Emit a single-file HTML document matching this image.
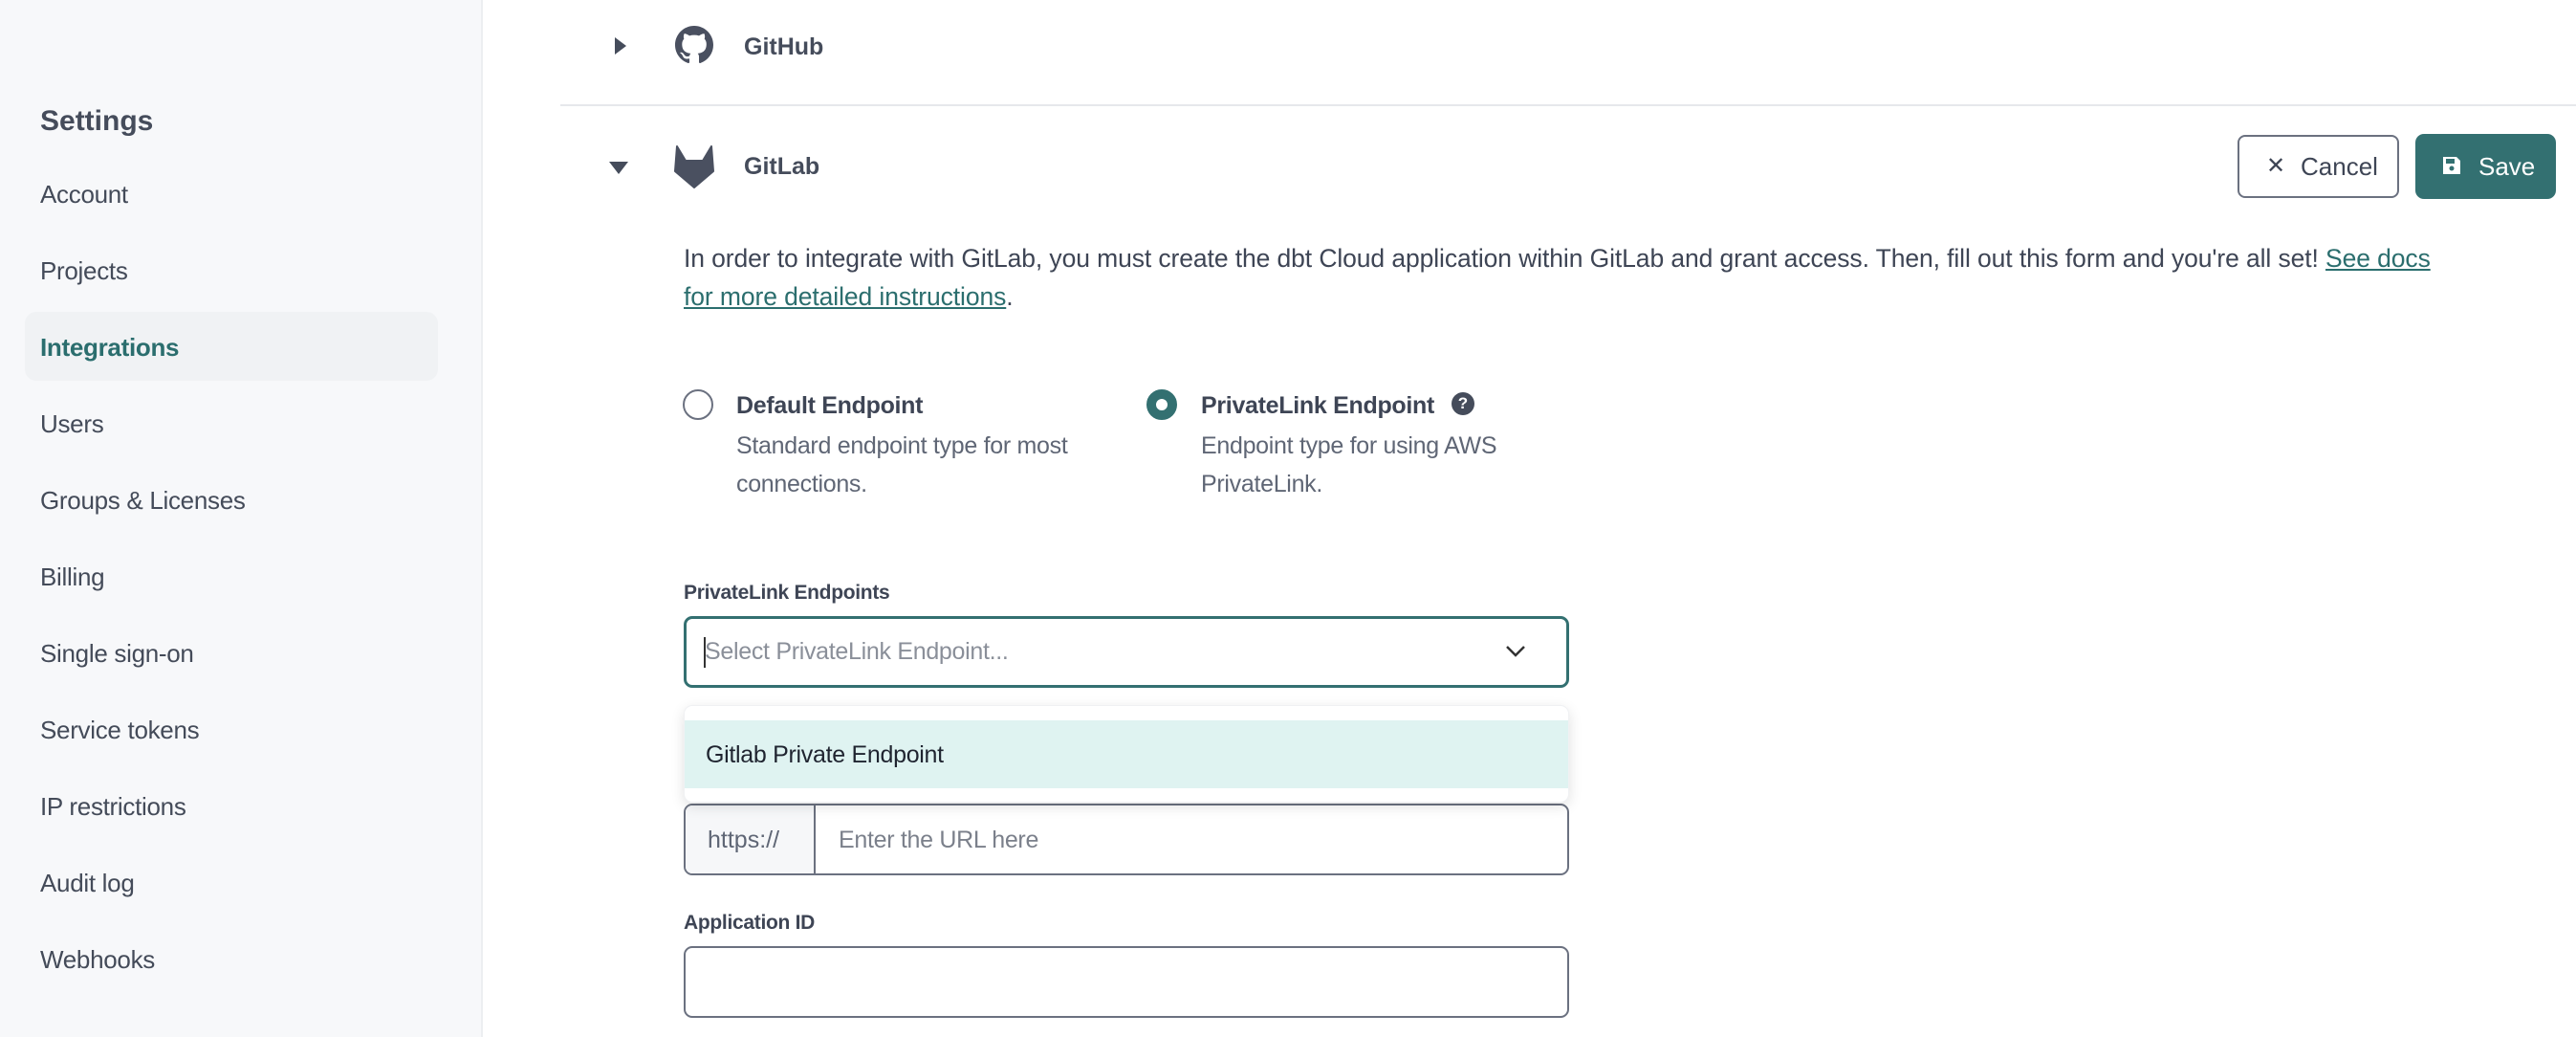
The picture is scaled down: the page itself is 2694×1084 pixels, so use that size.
<!DOCTYPE html>
<html><head><meta charset="utf-8"><style>
*{margin:0;padding:0;box-sizing:border-box}
body{width:2694px;height:1084px;overflow:hidden;background:#fff;font-family:"Liberation Sans",sans-serif;color:#3e4555;position:relative}
.a{position:absolute;white-space:nowrap}
#side{position:absolute;left:0;top:0;width:505px;height:1084px;background:#f7f8fa;border-right:2px solid #eceef1}
.nav{position:absolute;left:42px;font-size:26px;color:#444b59;letter-spacing:-0.3px}
.b{font-weight:bold}
.box{position:absolute;border:2px solid #6b7180;border-radius:9px;background:#fff}
</style></head><body>
<div id="side">
<div class="a b" style="left:42px;top:110px;font-size:30px;color:#454c5b">Settings</div>
<div style="position:absolute;left:26px;top:326px;width:432px;height:72px;background:#f0f2f4;border-radius:12px"></div>
<div class="nav" style="top:188px">Account</div>
<div class="nav" style="top:268px">Projects</div>
<div class="nav b" style="top:348px;color:#2b6e6e">Integrations</div>
<div class="nav" style="top:428px">Users</div>
<div class="nav" style="top:508px">Groups &amp; Licenses</div>
<div class="nav" style="top:588px">Billing</div>
<div class="nav" style="top:668px">Single sign-on</div>
<div class="nav" style="top:748px">Service tokens</div>
<div class="nav" style="top:828px">IP restrictions</div>
<div class="nav" style="top:908px">Audit log</div>
<div class="nav" style="top:988px">Webhooks</div>
</div>

<!-- GitHub row -->
<svg class="a" style="left:641px;top:37px" width="16" height="22"><path d="M2 2 L14 11 L2 20Z" fill="#454c5b"/></svg>
<svg class="a" style="left:706px;top:27px" width="40" height="40" viewBox="0 0 16 16"><path fill="#4a5060" d="M8 0C3.58 0 0 3.58 0 8c0 3.54 2.29 6.53 5.47 7.590.4.07.55-.17.55-.38 0-.19-.01-.82-.01-1.49-2.01.37-2.53-.49-2.69-.94-.09-.23-.48-.94-.82-1.130-.28-.15-.68-.52-.01-.53.63-.01 1.08.58 1.23.82.72 1.21 1.87.87 2.33.66.07-.52.28-.87.51-1.07-1.78-.2-3.64-.89-3.64-3.95 0-.87.31-1.59.82-2.15-.08-.2-.36-1.02.08-2.12 0 0 .67-.21 2.2.82.64-.18 1.32-.27 2-.27.68 0 1.36.09 2 .27 1.53-1.04 2.2-.82 2.2-.82.44 1.1.16 1.92.08 2.12.51.56.82 1.27.82 2.15 0 3.07-1.87 3.75-3.65 3.95.29.25.54.73.54 1.48 0 1.07-.01 1.93-.01 2.2 0 .21.15.46.55.38A8.013 8.013 0 0016 8c0-4.42-3.58-8-8-8z"/></svg>
<div class="a b" style="left:778px;top:35px;font-size:25px;color:#454c5b">GitHub</div>
<div class="a" style="left:586px;top:109px;width:2108px;height:2px;background:#e6e8ec"></div>

<!-- GitLab row -->
<svg class="a" style="left:636px;top:168px" width="22" height="16"><path d="M1 1 L21 1 L11 14Z" fill="#454c5b"/></svg>
<svg class="a" style="left:705px;top:152px" width="42" height="46" viewBox="0 0 42 46"><path d="M3 1 L12 16 L30 16 L39 1 L41 27 L21 44 L1 27Z" fill="#4a5060" stroke="#4a5060" stroke-linejoin="round" stroke-width="2"/></svg>
<div class="a b" style="left:778px;top:160px;font-size:25px;color:#454c5b">GitLab</div>

<div class="a" style="left:2340px;top:141px;width:169px;height:66px;border:2px solid #6b7180;border-radius:8px;font-size:26px;line-height:62px;color:#3e4555"><span style="position:absolute;left:28px;font-size:24px">✕</span><span style="position:absolute;left:64px">Cancel</span></div>
<div class="a" style="left:2526px;top:140px;width:147px;height:68px;background:#337071;border-radius:9px;font-size:26px;line-height:68px;color:#fff">
<svg style="position:absolute;left:27px;top:22px" width="22" height="22" viewBox="0 0 22 22"><path d="M2 2h14l4 4v14H2z" fill="#fff"/><rect x="5" y="4" width="9" height="5" fill="#337071"/><circle cx="11" cy="14" r="2.5" fill="#337071"/></svg>
<span style="position:absolute;left:66px">Save</span></div>

<div class="a" style="left:715px;top:250px;font-size:26.5px;line-height:40px;color:#3e4555;letter-spacing:-0.1px">In order to integrate with GitLab, you must create the dbt Cloud application within GitLab and grant access. Then, fill out this form and you're all set! <span style="color:#2b6e6e;text-decoration:underline">See docs</span><br><span style="color:#2b6e6e;text-decoration:underline">for more detailed instructions</span>.</div>

<!-- radios -->
<div class="a" style="left:714px;top:407px;width:32px;height:32px;border:2px solid #6b7180;border-radius:50%"></div>
<div class="a b" style="left:770px;top:410px;font-size:25px;color:#3e4555;letter-spacing:-0.3px">Default Endpoint</div>
<div class="a" style="left:770px;top:446px;font-size:25px;line-height:40px;color:#5f6675;letter-spacing:-0.3px">Standard endpoint type for most<br>connections.</div>
<div class="a" style="left:1199px;top:407px;width:32px;height:32px;border:10px solid #337071;border-radius:50%;background:#fff"></div>
<div class="a b" style="left:1256px;top:410px;font-size:25px;color:#3e4555;letter-spacing:-0.3px">PrivateLink Endpoint</div>
<div class="a" style="left:1518px;top:410px;width:24px;height:24px;border-radius:50%;background:#454c5b;color:#fff;font-size:17px;font-weight:bold;text-align:center;line-height:24px">?</div>
<div class="a" style="left:1256px;top:446px;font-size:25px;line-height:40px;color:#5f6675;letter-spacing:-0.3px">Endpoint type for using AWS<br>PrivateLink.</div>

<!-- select -->
<div class="a b" style="left:715px;top:608px;font-size:21px;color:#3e4555;letter-spacing:-0.3px">PrivateLink Endpoints</div>
<div class="a" style="left:715px;top:644px;width:926px;height:75px;border:3px solid #337071;border-radius:9px"></div>
<div class="a" style="left:736px;top:666px;width:2px;height:32px;background:#333"></div>
<div class="a" style="left:737px;top:667px;font-size:25px;color:#8a8f99;letter-spacing:-0.3px">Select PrivateLink Endpoint...</div>
<svg class="a" style="left:1574px;top:674px" width="22" height="14"><path d="M2 2 L11 11 L20 2" stroke="#333" stroke-width="2.5" fill="none"/></svg>

<!-- https input -->
<div class="box" style="left:715px;top:840px;width:926px;height:75px;overflow:hidden"><div style="position:absolute;left:0;top:0;width:136px;height:75px;background:#f6f7f9;border-right:2px solid #6b7180"></div></div>
<div class="a" style="left:740px;top:864px;font-size:25px;color:#5f6675">https://</div>
<div class="a" style="left:877px;top:864px;font-size:25px;color:#7b808b;letter-spacing:-0.3px">Enter the URL here</div>

<!-- dropdown menu -->
<div class="a" style="left:715px;top:737px;width:926px;height:102px;background:#fff;border-radius:9px;box-shadow:0 4px 14px rgba(0,0,0,0.12);border:1px solid #f0f1f3;overflow:hidden"><div style="position:absolute;left:0;top:15px;width:926px;height:71px;background:#dff3f1"></div></div>
<div class="a" style="left:738px;top:775px;font-size:25px;color:#1f2430;letter-spacing:-0.3px">Gitlab Private Endpoint</div>

<div class="a b" style="left:715px;top:953px;font-size:21px;color:#3e4555;letter-spacing:-0.3px">Application ID</div>
<div class="box" style="left:715px;top:989px;width:926px;height:75px"></div>
</body></html>
